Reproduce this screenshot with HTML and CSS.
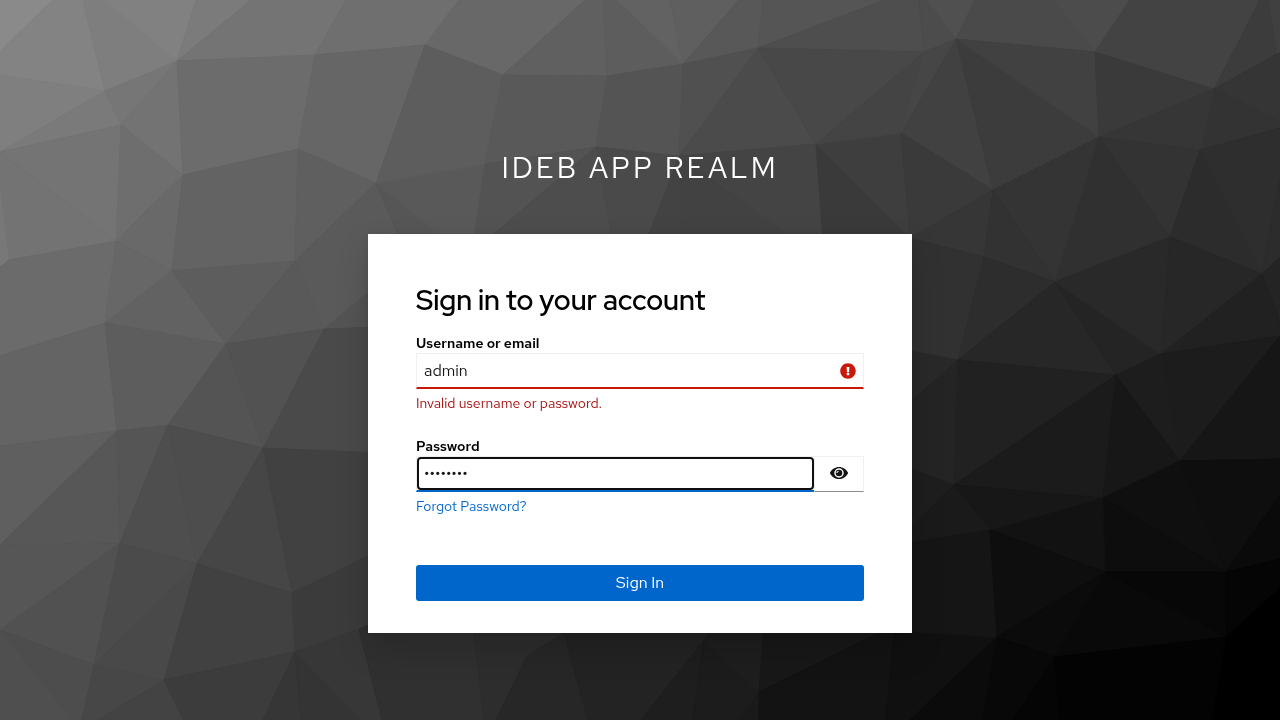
FILE: index.html
```html
<!DOCTYPE html>
<html lang="en">
<head>
<meta charset="utf-8">
<meta name="viewport" content="width=device-width, initial-scale=1">
<title>Sign in to IDEB App Realm</title>
<link rel="stylesheet" href="styles.css">
</head>
<body>
<svg class="backdrop" viewBox="0 0 1280 720" preserveAspectRatio="xMidYMid slice" aria-hidden="true">
<polygon color="#8a8a8a" points="0,0 53,0 0,51"/>
<polygon color="#838383" points="53,0 83,0 105,91 0,75 0,51"/>
<polygon color="#7e7e7e" points="83,0 104,0 177,61 105,91"/>
<polygon color="#818181" points="104,0 196,0 177,61"/>
<polygon color="#7b7b7b" points="196,0 251,0 177,61"/>
<polygon color="#747474" points="251,0 346,0 315,55 177,61"/>
<polygon color="#6f6f6f" points="346,0 459,0 425,45 315,55"/>
<polygon color="#7f7f7f" points="0,75 105,91 0,152"/>
<polygon color="#7a7a7a" points="0,152 105,91 121,125"/>
<polygon color="#767676" points="105,91 177,61 121,125"/>
<polygon color="#737373" points="177,61 183,175 121,125"/>
<polygon color="#6c6c6c" points="177,61 315,55 298,149 183,175"/>
<polygon color="#666666" points="315,55 425,45 376,183 298,149"/>
<polygon color="#747474" points="0,152 121,125 116,241"/>
<polygon color="#737373" points="0,152 116,241 9,260 0,190"/>
<polygon color="#787878" points="0,190 9,260 0,267"/>
<polygon color="#6e6e6e" points="121,125 183,175 116,241"/>
<polygon color="#696969" points="183,175 172,271 116,241"/>
<polygon color="#636363" points="183,175 298,149 295,261 172,271"/>
<polygon color="#5f5f5f" points="298,149 376,183 295,261"/>
<polygon color="#5a5a5a" points="376,183 400,240 368,293 324,329 295,261"/>
<polygon color="#565656" points="376,183 445,240 400,240"/>
<polygon color="#595959" points="376,183 485,164 474,240 445,240"/>
<polygon color="#6b6b6b" points="0,267 9,260 116,241 105,323 0,356"/>
<polygon color="#676767" points="116,241 172,271 105,323"/>
<polygon color="#626262" points="172,271 226,344 105,323"/>
<polygon color="#5d5d5d" points="172,271 295,261 226,344"/>
<polygon color="#595959" points="295,261 324,329 226,344"/>
<polygon color="#545454" points="324,329 380,283 380,327"/>
<polygon color="#646464" points="0,356 105,323 117,431 0,446"/>
<polygon color="#5d5d5d" points="105,323 226,344 168,425 117,431"/>
<polygon color="#545454" points="226,344 263,448 168,425"/>
<polygon color="#525252" points="226,344 324,329 263,448"/>
<polygon color="#4a4a4a" points="324,329 380,327 380,453 263,448"/>
<polygon color="#5f5f5f" points="0,446 117,431 0,545"/>
<polygon color="#575757" points="117,431 120,543 0,545"/>
<polygon color="#555555" points="117,431 168,425 120,543"/>
<polygon color="#4e4e4e" points="168,425 197,564 120,543"/>
<polygon color="#4d4d4d" points="168,425 263,448 197,564"/>
<polygon color="#464646" points="263,448 292,593 197,564"/>
<polygon color="#414141" points="263,448 380,453 380,550 292,593"/>
<polygon color="#565656" points="0,545 120,543 0,630"/>
<polygon color="#515151" points="0,630 120,543 94,665"/>
<polygon color="#4b4b4b" points="120,543 197,564 94,665"/>
<polygon color="#494949" points="197,564 164,680 94,665"/>
<polygon color="#414141" points="197,564 292,593 295,652 164,680"/>
<polygon color="#3b3b3b" points="292,593 380,550 380,622 295,652"/>
<polygon color="#4d4d4d" points="0,630 94,665 82,720 72,720"/>
<polygon color="#4f4f4f" points="0,630 72,720 0,720"/>
<polygon color="#474747" points="94,665 164,680 98,720 82,720"/>
<polygon color="#434343" points="164,680 184,720 98,720"/>
<polygon color="#3c3c3c" points="164,680 295,652 263,720 184,720"/>
<polygon color="#363636" points="295,652 301,720 263,720"/>
<polygon color="#343434" points="295,652 362,720 301,720"/>
<polygon color="#373737" points="295,652 359,629 382,720 362,720"/>
<polygon color="#303030" points="359,629 380,620 473,625 484,720 382,720"/>
<polygon color="#2d2d2d" points="473,625 576,625 564,633 527,656 496,720 484,720"/>
<polygon color="#272727" points="527,656 564,633 588,720 496,720"/>
<polygon color="#232323" points="562,625 718,625 704,640 641,720 588,720"/>
<polygon color="#1e1e1e" points="704,640 693,720 641,720"/>
<polygon color="#1c1c1c" points="704,640 759,692 740,720 693,720"/>
<polygon color="#1a1a1a" points="759,692 759,720 740,720"/>
<polygon color="#1e1e1e" points="716,625 764,625 759,692 704,640"/>
<polygon color="#181818" points="764,625 895,625 759,692"/>
<polygon color="#131313" points="759,692 895,625 886,720 759,720"/>
<polygon color="#101010" points="895,625 912,631 997,637 910,720 886,720"/>
<polygon color="#686868" points="459,0 585,0 503,75 425,45"/>
<polygon color="#606060" points="585,0 603,0 607,76 503,75"/>
<polygon color="#5d5d5d" points="603,0 617,0 683,64 607,76"/>
<polygon color="#626262" points="617,0 670,0 683,64"/>
<polygon color="#5f5f5f" points="670,0 739,0 683,64"/>
<polygon color="#585858" points="739,0 763,0 758,48 683,64"/>
<polygon color="#555555" points="763,0 884,0 758,48"/>
<polygon color="#4e4e4e" points="884,0 919,0 924,52 758,48"/>
<polygon color="#5d5d5d" points="425,45 503,75 485,164 376,183"/>
<polygon color="#595959" points="503,75 607,76 596,147 485,164"/>
<polygon color="#545454" points="607,76 683,64 679,156 596,147"/>
<polygon color="#505050" points="683,64 758,48 679,156"/>
<polygon color="#4b4b4b" points="758,48 816,144 679,156"/>
<polygon color="#484848" points="758,48 924,52 816,144"/>
<polygon color="#535353" points="485,164 596,147 487,240 474,240"/>
<polygon color="#4d4d4d" points="596,147 612,240 487,240"/>
<polygon color="#4a4a4a" points="596,147 679,156 647,240 612,240"/>
<polygon color="#434343" points="679,156 683,240 647,240"/>
<polygon color="#424242" points="679,156 796,240 683,240"/>
<polygon color="#444444" points="679,156 816,144 823,240 796,240"/>
<polygon color="#3e3e3e" points="816,144 901,133 910,238"/>
<polygon color="#3a3a3a" points="816,144 910,238 823,240"/>
<polygon color="#444444" points="816,144 924,52 901,133"/>
<polygon color="#4c4c4c" points="919,0 927,0 956,39 924,52"/>
<polygon color="#505050" points="927,0 975,0 956,39"/>
<polygon color="#4a4a4a" points="975,0 1053,0 1095,52 956,39"/>
<polygon color="#4c4c4c" points="1053,0 1130,0 1095,52"/>
<polygon color="#434343" points="1130,0 1260,0 1214,89 1095,52"/>
<polygon color="#3c3c3c" points="1260,0 1269,0 1277,54 1214,89"/>
<polygon color="#404040" points="1269,0 1280,0 1280,53 1277,54"/>
<polygon color="#464646" points="924,52 956,39 901,133"/>
<polygon color="#414141" points="956,39 993,190 901,133"/>
<polygon color="#3c3c3c" points="956,39 1099,137 993,190"/>
<polygon color="#414141" points="956,39 1095,52 1099,137"/>
<polygon color="#3a3a3a" points="1095,52 1214,89 1099,137"/>
<polygon color="#353535" points="1214,89 1277,54 1280,53 1280,122"/>
<polygon color="#333333" points="1214,89 1280,122 1280,128 1200,150"/>
<polygon color="#363636" points="1214,89 1200,150 1099,137"/>
<polygon color="#333333" points="1099,137 1200,150 1170,237"/>
<polygon color="#303030" points="1099,137 1170,237 1055,281"/>
<polygon color="#343434" points="1099,137 1055,281 993,190"/>
<polygon color="#3a3a3a" points="993,190 901,133 910,238"/>
<polygon color="#363636" points="993,190 984,257 910,238"/>
<polygon color="#323232" points="993,190 1055,281 984,257"/>
<polygon color="#2e2e2e" points="1200,150 1280,128 1280,178 1262,274"/>
<polygon color="#2c2c2c" points="1200,150 1262,274 1170,237"/>
<polygon color="#2c2c2c" points="1280,178 1280,257 1262,274"/>
<polygon color="#242424" points="1262,274 1280,257 1280,323"/>
<polygon color="#313131" points="910,238 984,257 958,360 900,349"/>
<polygon color="#2d2d2d" points="984,257 1055,282 958,360"/>
<polygon color="#272727" points="1055,282 1116,375 958,360"/>
<polygon color="#242424" points="1055,282 1161,354 1116,375"/>
<polygon color="#292929" points="1055,282 1170,237 1161,354"/>
<polygon color="#272727" points="1170,237 1262,274 1161,354"/>
<polygon color="#212121" points="1262,274 1280,323 1280,336 1161,354"/>
<polygon color="#1c1c1c" points="1161,354 1280,336 1180,461"/>
<polygon color="#1d1d1d" points="1116,375 1161,354 1180,461"/>
<polygon color="#161616" points="1280,336 1280,459 1180,461"/>
<polygon color="#292929" points="900,349 958,360 900,411"/>
<polygon color="#242424" points="958,360 954,485 900,465 900,411"/>
<polygon color="#212121" points="958,360 1116,375 954,485"/>
<polygon color="#1b1b1b" points="1116,375 1103,498 954,485"/>
<polygon color="#171717" points="1116,375 1180,461 1103,498"/>
<polygon color="#0e0e0e" points="1180,461 1280,459 1280,495 1226,572"/>
<polygon color="#0f0f0f" points="1180,461 1226,572 1103,498"/>
<polygon color="#0d0d0d" points="1103,498 1226,572 1105,572"/>
<polygon color="#121212" points="1103,498 1105,572 990,530"/>
<polygon color="#171717" points="954,485 1103,498 990,530"/>
<polygon color="#1e1e1e" points="900,465 954,485 900,538"/>
<polygon color="#1a1a1a" points="954,485 990,530 900,544 900,538"/>
<polygon color="#151515" points="990,530 997,637 900,631 900,544"/>
<polygon color="#0e0e0e" points="990,530 1105,572 997,637"/>
<polygon color="#0b0b0b" points="1105,572 1054,657 997,637"/>
<polygon color="#090909" points="1105,572 1226,637 1054,657"/>
<polygon color="#070707" points="1105,572 1226,572 1226,637"/>
<polygon color="#0a0a0a" points="1226,572 1280,495 1280,559"/>
<polygon color="#050505" points="1226,572 1280,559 1280,588 1226,637"/>
<polygon color="#000000" points="1226,637 1280,588 1280,720 1212,720"/>
<polygon color="#030303" points="1226,637 1212,720 1060,720 1054,657"/>
<polygon color="#050505" points="1054,657 1060,720 1012,720"/>
<polygon color="#080808" points="997,637 1054,657 1012,720 982,720"/>
<polygon color="#0b0b0b" points="997,637 982,720 910,720"/>
</svg>
<div class="login">
  <header class="realm">IDEB App Realm</header>
  <main class="card">
    <h1 class="card-title">Sign in to your account</h1>
    <form class="form">
      <div class="field">
        <label class="label" for="username">Username or email</label>
        <div class="control control-error">
          <input class="input" id="username" type="text" value="admin" aria-invalid="true" aria-describedby="username-error">
          <svg class="error-icon" viewBox="0 0 512 512" aria-hidden="true"><path d="M504 256c0 137-111 248-248 248S8 393 8 256 119 8 256 8s248 111 248 248zm-248 50c-25.400 0-46 20.600-46 46s20.600 46 46 46 46-20.600 46-46-20.600-46-46-46zm-43.700-165.300l7.400 136c.300 6.400 5.600 11.300 12 11.300h48.600c6.400 0 11.600-5 12-11.300l7.400-136c.400-6.900-5.100-12.700-12-12.700h-63.400c-6.900 0-12.400 5.800-12 12.700z"/></svg>
        </div>
        <span class="error-text" id="username-error">Invalid username or password.</span>
      </div>
      <div class="field">
        <label class="label" for="password">Password</label>
        <div class="input-group">
          <div class="control control-active">
            <input class="input input-ring" id="password" type="password" value="password">
          </div>
          <button class="reveal" type="button" aria-label="Show password">
            <svg class="eye" viewBox="0 0 576 512" aria-hidden="true"><path d="M572.500 241.400C518.300 135.600 410.900 64 288 64S57.700 135.600 3.500 241.400a32.400 32.400 0 0 0 0 29.200C57.700 376.400 165.100 448 288 448s230.300-71.600 284.500-177.400a32.400 32.400 0 0 0 0-29.200zM288 408a152 152 0 1 1 152-152 152 152 0 0 1-152 152z"/><path d="M288 150a106 106 0 1 0 106 106A106 106 0 0 0 288 150zm-12 30v38a38 38 0 0 0-34 40h-38a78 78 0 0 1 72-78z"/></svg>
          </button>
        </div>
        <a class="forgot" href="#">Forgot Password?</a>
      </div>
      <button class="submit" type="submit">Sign In</button>
    </form>
  </main>
</div>
</body>
</html>
```

FILE: styles.css
```css
* {
  box-sizing: border-box;
}

body {
  margin: 0;
  min-height: 100vh;
  background: #333;
  color: #151515;
  font-family: "Red Hat Text", Lato, "Liberation Sans", sans-serif;
  font-size: 14px;
  line-height: 21px;
}

.backdrop {
  position: fixed;
  inset: 0;
  z-index: -1;
  width: 100%;
  height: 100%;
}

.backdrop polygon {
  fill: currentColor;
  stroke: currentColor;
  stroke-width: 1;
  stroke-linejoin: round;
}

.login {
  display: flex;
  flex-direction: column;
  align-items: center;
}

.realm {
  padding: 152px 20px 50px;
  color: #fff;
  font-size: 29px;
  font-weight: 400;
  line-height: 32px;
  letter-spacing: 3px;
  text-align: center;
  text-transform: uppercase;
}

.card {
  width: 100%;
  max-width: 544px;
  padding: 48px 48px 32px;
  background: #fff;
  box-shadow: 0 16px 32px rgba(3, 3, 3, 0.16), 0 0 8px rgba(3, 3, 3, 0.1);
}

.card-title {
  margin: 0 0 16px;
  color: #000;
  font-family: "Red Hat Display", Lato, "Liberation Sans", sans-serif;
  font-size: 28px;
  font-weight: 600;
  line-height: 36px;
}

.form {
  display: flex;
  flex-direction: column;
}

.field {
  display: flex;
  flex-direction: column;
  margin-bottom: 23px;
}

.label {
  color: #000;
  line-height: 19px;
  font-weight: 600;
}

.control {
  display: flex;
  align-items: center;
  flex: 1;
  height: 36px;
  border: 1px solid #f0f0f0;
  border-bottom: 2px solid #8a8d90;
  background: #fff;
}

.control-error {
  flex: none;
  padding-right: 7px;
  border-bottom-color: #c9190b;
}

.control-active {
  border-right: 0;
  border-bottom-color: #06c;
}

.input {
  flex: 1;
  min-width: 0;
  height: 33px;
  padding: 0 7px;
  border: 0;
  outline: 0;
  background: transparent;
  color: #151515;
  font: inherit;
  font-size: 16px;
}

.input-ring {
  padding: 0 5px;
  border: 2px solid #101010;
  border-radius: 4px;
}

.error-icon {
  width: 16px;
  height: 16px;
  fill: #c9190b;
}

.error-text {
  margin-top: 4px;
  color: #a81010;
}

.input-group {
  display: flex;
}

.reveal {
  display: flex;
  align-items: center;
  justify-content: center;
  width: 50px;
  height: 36px;
  padding: 0 0 2px;
  border: 1px solid #f0f0f0;
  border-bottom-color: #8a8d90;
  background: #fff;
}

.eye {
  width: 18px;
  height: 16px;
  fill: #151515;
}

.forgot {
  align-self: flex-start;
  margin-top: 4px;
  color: #06c;
  text-decoration: none;
}

.submit {
  margin-top: 25px;
  height: 36px;
  padding: 0 16px 2px;
  border: 0;
  border-radius: 3px;
  background: #06c;
  color: #fff;
  font: inherit;
  font-size: 16px;
}
```
